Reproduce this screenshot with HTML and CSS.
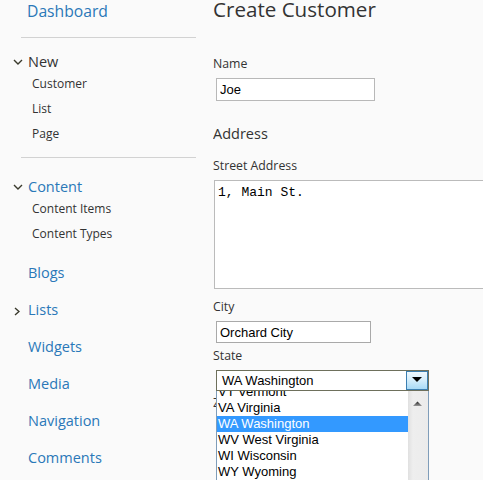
FILE: index.html
```html
<!DOCTYPE html>
<html lang="en">
<head>
<meta charset="utf-8">
<title>Create Customer</title>
<link rel="stylesheet" href="styles.css">
</head>
<body>
<div class="layout">
  <nav class="sidebar">
    <a class="dash">Dashboard</a>
    <div class="sep sep-1"></div>
    <div class="group group-new">
      <div class="group-head"><svg class="chev" viewBox="0 0 10 6"><path d="M1 1 L5 5 L9 1" fill="none" stroke="#3a3a2c" stroke-width="1.4"/></svg><span>New</span></div>
      <ul class="sub">
        <li>Customer</li>
        <li>List</li>
        <li>Page</li>
      </ul>
    </div>
    <div class="sep sep-2"></div>
    <div class="group group-content">
      <div class="group-head is-link"><svg class="chev" viewBox="0 0 10 6"><path d="M1 1 L5 5 L9 1" fill="none" stroke="#3a3a2c" stroke-width="1.4"/></svg><span>Content</span></div>
      <ul class="sub">
        <li>Content Items</li>
        <li>Content Types</li>
      </ul>
    </div>
    <ul class="top">
      <li>Blogs</li>
      <li class="has-chev"><svg class="chev-r" viewBox="0 0 6 9"><path d="M1 1 L5 4.5 L1 8" fill="none" stroke="#3a3a2c" stroke-width="1.4"/></svg><span>Lists</span></li>
      <li>Widgets</li>
      <li>Media</li>
      <li>Navigation</li>
      <li>Comments</li>
    </ul>
  </nav>
  <main class="main">
    <h1 class="title">Create Customer</h1>
    <label class="field-label label-name">Name</label>
    <input class="text-input input-name" type="text" value="Joe">
    <h2 class="section">Address</h2>
    <label class="field-label label-street">Street Address</label>
    <textarea class="textarea">1, Main St.</textarea>
    <label class="field-label label-city">City</label>
    <input class="text-input input-city" type="text" value="Orchard City">
    <label class="field-label label-state">State</label>
    <div class="select-wrap">
      <div class="select">
        <span class="select-value">WA Washington</span>
        <span class="select-btn"><svg viewBox="0 0 20 17" width="20" height="17"><polygon points="5,5 15,5 10,10" fill="#000"/></svg></span>
      </div>
      <div class="listbox">
        <ul class="options">
          <li class="opt">VT Vermont</li>
          <li class="opt">VA Virginia</li>
          <li class="opt selected">WA Washington</li>
          <li class="opt">WV West Virginia</li>
          <li class="opt">WI Wisconsin</li>
          <li class="opt">WY Wyoming</li>
        </ul>
        <div class="scrollbar">
          <svg viewBox="0 0 20 20" width="20" height="20"><defs><linearGradient id="ag" x1="0" y1="0" x2="0" y2="1"><stop offset="0" stop-color="#222"/><stop offset="1" stop-color="#999"/></linearGradient></defs><polygon points="5,15 14,15 9.5,10.5" fill="url(#ag)"/></svg>
        </div>
      </div>
    </div>
    <label class="field-label label-zip">Zip Code</label>
  </main>
</div>
</body>
</html>
```

FILE: styles.css
```css
* { box-sizing: border-box; }
html, body { margin: 0; padding: 0; }
body {
  background: #fafafa;
  font-family: "Open Sans", "Noto Sans", sans-serif;
  color: #333;
  width: 483px;
  height: 480px;
  overflow: hidden;
}
.layout {
  display: grid;
  grid-template-columns: 213px 1fr;
  height: 480px;
  overflow: hidden;
}

/* Sidebar */
.sidebar { display: flex; flex-direction: column; }
.dash {
  display: block;
  padding-left: 27px;
  font-size: 15.7px;
  line-height: 22px;
  height: 22px;
  color: #2a78b8;
  text-decoration: none;
}
.sep { height: 1px; background: #d2d2d2; margin-left: 21px; width: 175px; flex: none; }
.sep-1 { margin-top: 15px; }
.sep-2 { margin-top: 11px; }
.group-new { margin-top: 14px; }
.group-content { margin-top: 19px; }
.group-head {
  display: flex;
  align-items: center;
  padding-left: 13px;
  height: 19px;
  font-size: 14.5px;
  line-height: 19px;
  color: #333;
}
.group-head.is-link { color: #2a78b8; }
.chev { width: 10px; height: 6px; margin: 1px 5px 0 0; flex: none; }
.sub { list-style: none; margin: 0; padding: 0; }
.sub li {
  padding-left: 32px;
  font-size: 12px;
  line-height: 25px;
  height: 25px;
  color: #333;
}
.top { list-style: none; margin: 8px 0 0; padding: 0; }
.top li {
  display: flex;
  align-items: center;
  height: 37px;
  padding-left: 28px;
  font-size: 14.5px;
  line-height: 37px;
  color: #2a78b8;
}
.top li.has-chev { padding-left: 14px; }
.chev-r { width: 6px; height: 9px; margin: 3px 8px 0 0; flex: none; }

/* Main */
.main {
  overflow: hidden;
  display: flex;
  flex-direction: column;
  align-items: flex-start;
}
.title {
  margin: -1px 0 0;
  font-size: 20.6px;
  line-height: 20px;
  font-weight: 400;
  color: #333;
}
.field-label {
  display: block;
  font-size: 12.3px;
  line-height: 16px;
  color: #333;
}
.label-name { margin-top: 37px; }
.label-street { margin-top: 14px; }
.label-city { margin-top: 10px; }
.label-state { margin-top: 5px; }
.label-zip { margin-top: 4px; }
.section {
  margin: 23px 0 0;
  font-size: 14.5px;
  line-height: 20px;
  font-weight: 400;
  color: #333;
}
.text-input {
  margin: 6px 0 0 3px;
  border: 1px solid #b8b8b8;
  border-radius: 0;
  background: #fff;
  font-family: "Liberation Sans", Arial, sans-serif;
  font-size: 13px;
  color: #000;
  padding: 0 3px;
  outline: none;
}
.input-name { width: 159px; height: 23px; }
.input-city { width: 155px; height: 22px; border-color: #a9a9a9; }
.textarea {
  margin: 6px 0 0 1px;
  width: 300px;
  height: 109px;
  flex: none;
  border: 1px solid #bbb;
  border-radius: 0;
  background: #fff;
  font-family: "Liberation Mono", "Courier New", monospace;
  font-size: 13px;
  color: #000;
  padding: 4px 3px;
  resize: none;
  outline: none;
  overflow: hidden;
}
.select-wrap { position: relative; margin: 6px 0 0 3px; }
.select {
  display: flex;
  width: 213px;
  height: 21px;
  border: 1px solid #6e705c;
  background: #fff;
}
.select-value {
  flex: 1;
  padding-left: 5px;
  font-family: "Liberation Sans", Arial, sans-serif;
  font-size: 13px;
  line-height: 19px;
  color: #000;
}
.select-btn {
  width: 22px;
  height: 19px;
  border: 1px solid #3c7fb1;
  background: linear-gradient(#eef8fe, #d6eefb 45%, #a8daf6);
  display: block;
}
.select-btn svg { display: block; }
.listbox {
  position: absolute;
  top: 100%;
  left: 0;
  width: 213px;
  height: 100px;
  display: grid;
  grid-template-columns: 1fr 20px;
  border-left: 1px solid #7f9db9;
  border-right: 1px solid #7f9db9;
  background: #fff;
  overflow: hidden;
  z-index: 2;
}
.options { list-style: none; margin: -7px 0 0; padding: 0; }
.opt {
  height: 16px;
  font-family: "Liberation Sans", Arial, sans-serif;
  font-size: 13px;
  line-height: 16px;
  padding-left: 1px;
  color: #000;
  white-space: nowrap;
}
.opt.selected { background: #3399ff; color: #fff; }
.scrollbar {
  background: linear-gradient(to right, #e0e0e0, #eeeeee 25%, #ebebeb);
}
.scrollbar svg { display: block; }
```
